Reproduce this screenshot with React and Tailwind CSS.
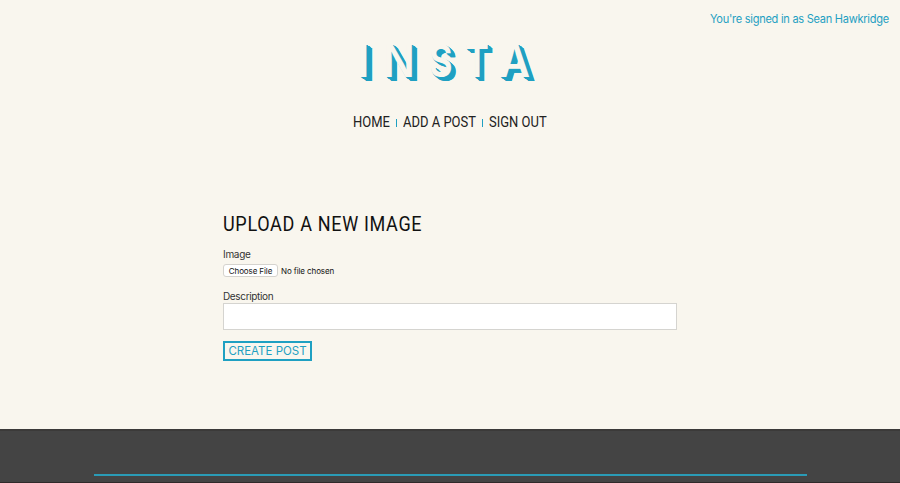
const EXTRUDED =
  "block origin-left [text-shadow:1px_0.7px_0_#1fa0c2,1.6px_1.1px_0_#1fa0c2,2.2px_1.5px_0_#1fa0c2,2.8px_1.9px_0_#1fa0c2,3.4px_2.3px_0_#1fa0c2,4px_2.7px_0_#1fa0c2,4.6px_3.1px_0_#1fa0c2,5.2px_3.5px_0_#1fa0c2,5.8px_4px_0_#1fa0c2]";

function Logo() {
  return (
    <div
      role="img"
      aria-label="INSTA"
      className="ml-[357px] mt-[3px] flex h-[46px] font-['Inter',sans-serif] text-[45.4px] font-semibold leading-[46px] text-[#f9f6ee]"
    >
      <span className="w-[26px]"><span className={EXTRUDED}>I</span></span>
      <span className="w-[46px]"><span className={`${EXTRUDED} scale-x-[0.92]`}>N</span></span>
      <span className="w-[36px]"><span className={`${EXTRUDED} scale-x-[0.8]`}>S</span></span>
      <span className="w-[34px]"><span className={`${EXTRUDED} scale-x-[0.8]`}>T</span></span>
      <span className="w-[40px]"><span className={`${EXTRUDED} scale-x-[0.94]`}>A</span></span>
    </div>
  );
}

function NavLink({ children, className }) {
  return (
    <a href="#" className={`block h-5 whitespace-nowrap ${className}`}>
      <span className="inline-block origin-left scale-x-[0.865]">{children}</span>
    </a>
  );
}

export default function App() {
  return (
    <div className="flex h-[483px] w-[900px] flex-col overflow-hidden bg-[#f9f6ee] text-[#333]">
      <header className="flex flex-col">
        <p className="flex h-[35px] justify-end pr-[11px] pt-[11px] font-['Inter',sans-serif] text-[11.3px] leading-4 text-[#1fa0c2]">
          <span className="w-[179px] whitespace-nowrap">
            <span className="inline-block origin-left scale-x-[0.976] tracking-[-0.27px]">You're signed in as Sean Hawkridge</span>
          </span>
        </p>
        <Logo />
        <nav className="ml-[353px] mt-[28px] flex h-5 items-start font-['Roboto',sans-serif] text-[15px] leading-5 text-[#222]">
          <NavLink className="w-[43px]">HOME</NavLink>
          <span className="mt-[7px] h-2 w-px bg-[#1fa0c2]" />
          <NavLink className="ml-[6px] w-[79px]">ADD A POST</NavLink>
          <span className="mt-[7px] h-2 w-px bg-[#1fa0c2]" />
          <NavLink className="ml-[6px] w-[60px]">SIGN OUT</NavLink>
        </nav>
      </header>

      <main className="ml-[223px] mt-[78px] flex h-[219px] w-[454px] flex-col">
        <h1 className="h-[28px] whitespace-nowrap font-['Roboto',sans-serif] text-[20.5px] leading-[28px] text-[#111]">
          <span className="inline-block origin-left scale-x-[0.88] tracking-[0.75px]">UPLOAD A NEW IMAGE</span>
        </h1>
        <label className="mt-[8px] h-4 font-['Inter',sans-serif] text-[10px] leading-4 tracking-[-0.3px]">Image</label>
        <div className="mt-[2px] flex h-[13px] items-center font-['Inter',sans-serif] text-[8px] text-[#111]">
          <button className="h-[13px] w-[55px] whitespace-nowrap rounded-[3px] border border-[#d5d3ce] bg-white text-center leading-[12px] tracking-[-0.1px]">Choose File</button>
          <span className="ml-[3px] whitespace-nowrap tracking-[-0.1px]">No file chosen</span>
        </div>
        <label className="mt-[11px] h-4 font-['Inter',sans-serif] text-[10px] leading-4 tracking-[-0.35px]">Description</label>
        <input type="text" aria-label="Description" className="-mt-px h-[27px] w-[454px] border border-[#d5d4d0] bg-white px-2 text-xs outline-none" />
        <button className="mt-[11px] h-[20px] w-[89px] whitespace-nowrap border-2 border-[#1fa0c2] text-center font-['Inter',sans-serif] text-[11.5px] leading-4 text-[#1fa0c2]">
          CREATE POST
        </button>
      </main>

      <footer className="flex h-[54px] flex-col border-b border-t-2 border-b-[#302a2a] border-t-[#3b3a39] bg-[#444]">
        <div className="ml-[94px] mt-[43px] h-[2px] w-[713px] bg-[#2a9bb6]" />
      </footer>
    </div>
  );
}
